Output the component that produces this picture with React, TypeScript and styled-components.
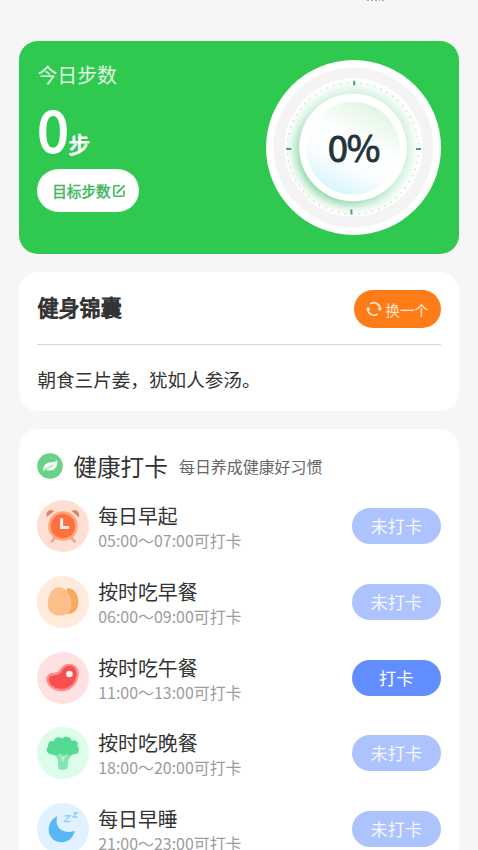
import React from "react";
import styled, { createGlobalStyle } from "styled-components";

const GlobalStyle = createGlobalStyle`
  * { box-sizing: border-box; }
  html, body { margin: 0; padding: 0; background: #f6f6f6; }
  body { height: 850px; overflow: hidden; font-family: "Noto Sans CJK SC", sans-serif; color: #333; }
`;

const Page = styled.main`
  width: 478px;
  height: 850px;
  overflow: hidden;
  padding: 0 18.6px;
  display: flex;
  flex-direction: column;
`;

const TopBar = styled.header`
  height: 41.3px;
  flex: none;
  padding-left: 346px;
`;

const ClippedMarks = styled.svg`
  display: block;
`;

const StepsCard = styled.section`
  flex: none;
  height: 212.5px;
  border-radius: 19px;
  background: #2fc94f;
  padding: 19px 18.4px 0 18.8px;
  display: flex;
  justify-content: space-between;
`;

const StepsInfo = styled.div`
  display: flex;
  flex-direction: column;
  align-items: flex-start;
`;

const StepsLabel = styled.div`
  font-size: 19.9px;
  line-height: 30px;
  color: #e0fae4;
`;

const StepsValue = styled.div`
  display: flex;
  align-items: baseline;
  height: 79px;
  line-height: 75px;
  color: #fff;
  font-size: 56px;
  -webkit-text-stroke: 2px #fff;
`;

const StepsUnit = styled.span`
  font-size: 21.5px;
  line-height: 30px;
  padding-bottom: 2px;
  align-self: flex-end;
  margin-bottom: 8px;
  -webkit-text-stroke: 1px #fff;
`;

const GoalButton = styled.button`
  border: 0;
  width: 102px;
  height: 42.5px;
  border-radius: 22px;
  background: #fff;
  color: #43b75b;
  font: 400 14.6px/42px "Noto Sans CJK SC", sans-serif;
  -webkit-text-stroke: 0.5px #43b75b;
  padding: 0 0 0 1px;
  display: flex;
  align-items: center;
  justify-content: center;
  gap: 1px;
`;

const Dial = styled.div`
  width: 175px;
  height: 175px;
  display: grid;
  place-items: center;
  > * { grid-area: 1 / 1; }
`;

const Percent = styled.div`
  z-index: 1;
  font-size: 36.5px;
  line-height: 40px;
  letter-spacing: -1.1px;
  color: #23333a;
  -webkit-text-stroke: 0.9px #23333a;
  padding-bottom: 2px;
`;

const TipCard = styled.section`
  flex: none;
  margin-top: 18.4px;
  height: 138.4px;
  border-radius: 19px;
  background: #fff;
  padding: 0 18.8px;
`;

const TipHead = styled.div`
  height: 73px;
  border-bottom: 1px solid #d6d6d6;
  display: flex;
  align-items: center;
  justify-content: space-between;
`;

const TipTitle = styled.h2`
  margin: 0;
  font-weight: 400;
  font-size: 21.1px;
  line-height: 30px;
  -webkit-text-stroke: 1.1px #333;
  padding-bottom: 2px;
`;

const SwapButton = styled.button`
  border: 0;
  margin-top: 2px;
  width: 87px;
  height: 37.4px;
  border-radius: 19px;
  background: #ff7b17;
  color: #ffe9d5;
  font: 400 14.4px/37px "Noto Sans CJK SC", sans-serif;
  padding: 0;
  display: flex;
  align-items: center;
  justify-content: center;
  gap: 4px;
`;

const TipText = styled.p`
  margin: 0;
  padding-top: 19px;
  font-size: 18.6px;
  line-height: 30px;
`;

const CheckCard = styled.section`
  flex: none;
  margin-top: 18.6px;
  height: 450px;
  border-radius: 19px;
  background: #fff;
  padding: 18px 18.6px 0 18.6px;
`;

const CheckHead = styled.div`
  height: 38px;
  display: flex;
  align-items: center;
`;

const CheckTitle = styled.h2`
  margin: 0 0 0 10px;
  font-weight: 400;
  font-size: 23.7px;
  line-height: 38px;
`;

const CheckNote = styled.span`
  margin-left: 11px;
  padding-bottom: 1px;
  font-size: 15.95px;
  line-height: 38px;
  color: #666;
`;

const HabitList = styled.ul`
  list-style: none;
  margin: 3.2px 0 0;
  padding: 0;
`;

const HabitRow = styled.li`
  height: 75.7px;
  display: flex;
  align-items: center;
`;

const HabitText = styled.div`
  margin-left: 9px;
  padding-top: 4px;
  flex: 1;
`;

const HabitName = styled.div`
  font-size: 19.9px;
  line-height: 25px;
`;

const HabitTime = styled.div`
  font-size: 15.95px;
  line-height: 25px;
  color: #9c9c9c;
`;

const StatusButton = styled.button<{ $open?: boolean }>`
  border: 0;
  width: 89px;
  height: 36px;
  border-radius: 18px;
  padding: 0;
  background: ${(p) => (p.$open ? "#628dfe" : "#adc3fe")};
  color: ${(p) => (p.$open ? "#fff" : "#f4f8ff")};
  font: 400 17.2px/36px "Noto Sans CJK SC", sans-serif;
`;

const Icon = styled.svg`
  display: block;
  flex: none;
`;

const DialFace = () => (
  <Icon width="175" height="175" viewBox="0 0 175 175">
    <defs>
      <linearGradient id="halo" x1="0.9" y1="0.1" x2="0.2" y2="0.9">
        <stop offset="0" stopColor="#c9eed9" />
        <stop offset="0.5" stopColor="#c5edd4" />
        <stop offset="1" stopColor="#74cf95" />
      </linearGradient>
      <linearGradient id="face" x1="0.75" y1="0" x2="0.25" y2="1">
        <stop offset="0" stopColor="#dcf4e1" />
        <stop offset="0.42" stopColor="#ffffff" />
        <stop offset="0.65" stopColor="#fbfefe" />
        <stop offset="1" stopColor="#d4f3fb" />
      </linearGradient>
      <filter id="soft" x="-30%" y="-30%" width="160%" height="160%">
        <feGaussianBlur stdDeviation="5.5" />
      </filter>
      <clipPath id="inner"><circle cx="87.5" cy="87.5" r="69" /></clipPath>
    </defs>
    <circle cx="87.5" cy="87.5" r="87.5" fill="#fff" />
    <circle cx="87.5" cy="87.5" r="74.5" fill="none" stroke="#f4f4f4" strokeWidth="11" />
    <g clipPath="url(#inner)">
      <circle cx="87" cy="87.5" r="58" fill="url(#halo)" filter="url(#soft)" />
    </g>
    <circle cx="87" cy="88.5" r="65.5" fill="none" stroke="#c3dfcd" strokeWidth="1.4" strokeDasharray="1.4 5.46" />
    <g fill="#4da568">
      <rect x="87.2" y="20.8" width="2" height="4.6" />
      <rect x="84.4" y="149.5" width="2" height="5" />
      <rect x="20.3" y="88" width="5" height="2" />
      <rect x="150" y="88" width="5" height="2" />
    </g>
    <circle cx="87" cy="87.5" r="53.8" fill="#fff" />
    <circle cx="87" cy="88.3" r="46.5" fill="url(#face)" />
  </Icon>
);

const EditIcon = () => (
  <Icon width="14" height="14" viewBox="0 0 14 14" fill="none" stroke="#43b75b" strokeWidth="1.6" strokeLinecap="round">
    <path d="M7.3 1.8H2.8Q1.8 1.8 1.8 2.8V11Q1.8 12.2 3 12.2H10.8Q12 12.2 12 11V7" />
    <path d="M5.2 8.8L12 1.9" strokeWidth="1.9" />
  </Icon>
);

const SwapIcon = () => (
  <Icon width="16" height="16" viewBox="0 0 16 16">
    <g fill="none" stroke="#ffe9d5" strokeWidth="1.7">
      <path d="M4.3 2.9A6.3 6.3 0 0 1 14.2 7.8" />
      <path d="M11.7 13.1A6.3 6.3 0 0 1 1.8 8.2" />
    </g>
    <path d="M0 9L2 5.4L4.4 9Z M16 7L14 10.6L11.6 7Z" fill="#ffe9d5" />
  </Icon>
);

const LeafIcon = () => (
  <Icon width="26" height="26" viewBox="0 0 26 26">
    <circle cx="13" cy="13" r="12.8" fill="#68d386" />
    <path d="M6.3 17.2C6 12.4 9.2 9.6 14 9.2C17 9 18.7 8.4 20.2 7.2C21.2 12.7 18.2 17.2 13.5 17.4C11.2 17.5 9.5 17 8.7 16.3L6.5 18.2Z" fill="#f4fff5" />
    <path d="M7.7 16.4Q12 14.8 16.3 11.9" fill="none" stroke="#68d386" strokeWidth="0.9" />
  </Icon>
);

const ClockIcon = () => (
  <Icon width="52" height="52" viewBox="0 0 52 52">
    <circle cx="26" cy="26" r="26" fill="#ffdfd3" />
    <path d="M9.8 17C8.3 10.5 14.5 8.3 17.1 11.2Z M34.6 11C38 8 43.8 11.5 41.8 17.4Z" fill="#d98962" />
    <path d="M17.8 38L14.8 41.5M34.2 38L37.7 41.5" stroke="#e5a88f" strokeWidth="2.5" strokeLinecap="round" />
    <circle cx="26" cy="26" r="14.8" fill="#ffa57e" />
    <circle cx="26" cy="26" r="12.2" fill="#ff7040" />
    <path d="M24.6 18.2V27.5H32.2" fill="none" stroke="#fff0e7" strokeWidth="3" />
  </Icon>
);

const EggIcon = () => (
  <Icon width="52" height="52" viewBox="0 0 52 52">
    <circle cx="26" cy="26" r="26" fill="#ffeadb" />
    <path d="M30 12.4C37 11.2 41.5 19 41.3 26.8C41 34 36.6 38.2 30.3 38Z" fill="#f5ab60" />
    <path d="M22 11.2C29.5 11.2 34.7 20.5 34.5 28C34.2 36 29.5 39.6 22.7 39.6C15.8 39.6 10.8 35.5 10.7 28C10.6 20 15 11.2 22 11.2Z" fill="#ffbf8a" />
  </Icon>
);

const MeatIcon = () => (
  <Icon width="52" height="52" viewBox="0 0 52 52">
    <circle cx="26" cy="26" r="26" fill="#ffe1e2" />
    <path d="M23.3 17C27 10.8 35 10 39.2 14.6C44.8 21.2 40.5 32.8 33.2 37C25.8 41.6 14.6 39 10.8 32C7.2 25.4 11 21.2 15.6 20.8C19.3 20.5 21.5 20.2 23.3 17Z" fill="#ff8b8b" />
    <path d="M25.4 18.2C29 12.8 34.8 12.7 37.5 16.2C42 22.1 38 31.2 31.8 35C25.7 38.6 16.2 36.6 13 31.2C10.4 26.5 12.5 23.4 16.3 23.4C20.7 23.3 23 21.8 25.4 18.2Z" fill="#f74e50" />
    <circle cx="32.4" cy="22" r="3.3" fill="#fff1ef" />
  </Icon>
);

const BroccoliIcon = () => (
  <Icon width="52" height="52" viewBox="0 0 52 52">
    <circle cx="26" cy="26" r="26" fill="#dcfdea" />
    <path d="M17.4 26L21.2 33.4V41.5Q25.5 44.3 30.4 41.5L31.2 33.6L35.6 26Z" fill="#83e5b2" />
    <path d="M15.3 27.4C10.8 28.3 7.8 22.6 11.2 19.3C10.7 15.5 13.8 13.6 16.6 14.2C18 9.9 22.4 9.2 25 11.5C28.7 8.4 33.9 9.5 34.6 13.8C39.4 12.5 42.1 15.5 40.4 19C43.8 22.5 41 28.2 36.7 27.1C34.2 29.5 31.2 28.4 30 26.2C28.5 28.4 24.4 28 23.2 26.1C21.4 28.8 17.5 29.3 15.3 27.4Z" fill="#55da96" />
    <path d="M26 34V30.5M23.2 28.8L25.8 31.4L29 28.8" fill="none" stroke="#dcfdea" strokeWidth="1" />
  </Icon>
);

const MoonIcon = () => (
  <Icon width="52" height="52" viewBox="0 0 52 52">
    <circle cx="26" cy="26" r="26" fill="#e0f2ff" />
    <path d="M20.2 13.3C17.1 24.3 25.6 32 37.8 27.8C36.4 34.9 31 39.3 24.4 39.3C17.2 39.3 11.7 33.9 11.7 27.1C11.7 20.7 15.2 15.4 20.2 13.3Z" fill="#58b7f7" />
    <path d="M27.5 12.7H33L27.7 18.6H33.5M36 9.8H40L36.2 14H40.5" fill="none" stroke="#8dcff6" strokeWidth="1.4" />
  </Icon>
);

const habits = [
  { name: "每日早起", time: "05:00～07:00可打卡", icon: <ClockIcon /> },
  { name: "按时吃早餐", time: "06:00～09:00可打卡", icon: <EggIcon /> },
  { name: "按时吃午餐", time: "11:00～13:00可打卡", icon: <MeatIcon />, open: true },
  { name: "按时吃晚餐", time: "18:00～20:00可打卡", icon: <BroccoliIcon /> },
  { name: "每日早睡", time: "21:00～23:00可打卡", icon: <MoonIcon /> },
];

export default function App() {
  return (
    <>
      <GlobalStyle />
      <Page>
        <TopBar>
          <ClippedMarks width="22" height="2" viewBox="0 0 22 2">
            <path d="M2 .5H4M6 .5H8M10 .5H12M14 .5H15M17 .5H19" stroke="#aaa" />
          </ClippedMarks>
        </TopBar>
        <StepsCard>
          <StepsInfo>
            <StepsLabel>今日步数</StepsLabel>
            <StepsValue>0<StepsUnit>步</StepsUnit></StepsValue>
            <GoalButton>目标步数<EditIcon /></GoalButton>
          </StepsInfo>
          <Dial>
            <DialFace />
            <Percent>0%</Percent>
          </Dial>
        </StepsCard>
        <TipCard>
          <TipHead>
            <TipTitle>健身锦囊</TipTitle>
            <SwapButton><SwapIcon />换一个</SwapButton>
          </TipHead>
          <TipText>朝食三片姜，犹如人参汤。</TipText>
        </TipCard>
        <CheckCard>
          <CheckHead>
            <LeafIcon />
            <CheckTitle>健康打卡</CheckTitle>
            <CheckNote>每日养成健康好习惯</CheckNote>
          </CheckHead>
          <HabitList>
            {habits.map((h) => (
              <HabitRow key={h.name}>
                {h.icon}
                <HabitText>
                  <HabitName>{h.name}</HabitName>
                  <HabitTime>{h.time}</HabitTime>
                </HabitText>
                <StatusButton $open={h.open}>{h.open ? "打卡" : "未打卡"}</StatusButton>
              </HabitRow>
            ))}
          </HabitList>
        </CheckCard>
      </Page>
    </>
  );
}
